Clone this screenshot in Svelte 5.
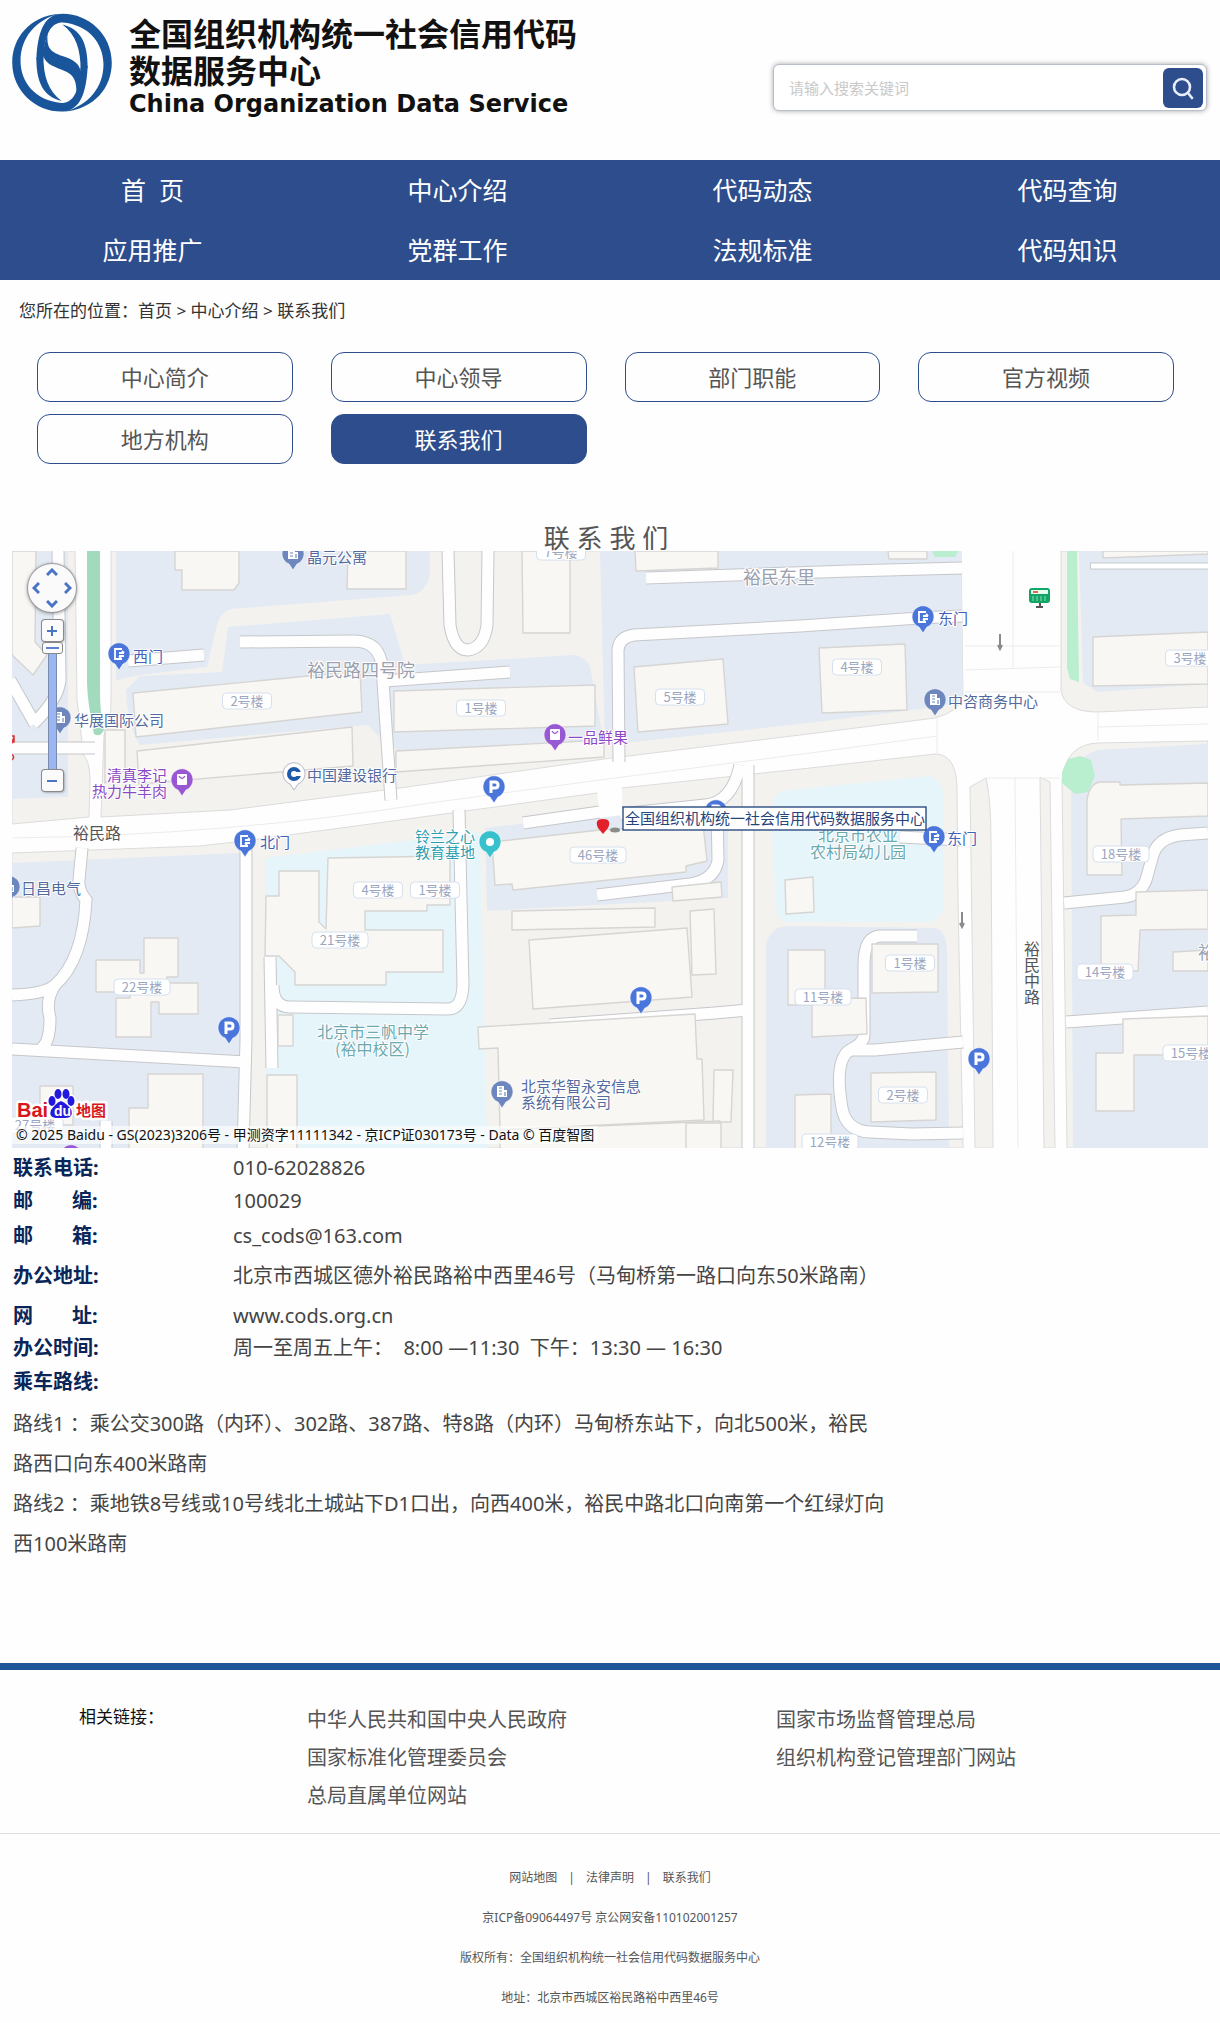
<script>
  const nav = ['首  页', '中心介绍', '代码动态', '代码查询', '应用推广', '党群工作', '法规标准', '代码知识'];
  const tabs = ['中心简介', '中心领导', '部门职能', '官方视频', '地方机构', '联系我们'];
  const links = ['中华人民共和国中央人民政府', '国家市场监督管理总局', '国家标准化管理委员会', '组织机构登记管理部门网站', '总局直属单位网站'];
  let zoom = $state(18);

  const land = [
    'M12,551 H75 L77,700 L82,742 L12,744Z',
    'M12,753 H82 Q90,760 90,780 L89,817 L12,824Z',
    'M111,551 H961 L963,697 Q958,712 935,718 L800,735 L604,759 L400,788 L230,810 L101,817 L104,735 Q111,725 111,700Z',
    'M12,853 L200,846 L244,841 L400,820 L597,793 L622,788 L810,768 L935,754 Q957,754 957,790 L958,900 L963,1148 H12Z',
    'M970,787 L986,778 Q991,800 991,840 L993,1148 H975Z',
    'M1040,777 L1050,782 L1055,1148 H1044Z',
    'M1061,551 V690 Q1064,712 1098,712 L1208,707 V551Z',
    'M1067,1148 L1062,780 Q1066,744 1098,743 L1208,741 V1148Z'
  ];
  const blue = [
    'M12,551 H68 V742 H12Z', 'M12,753 H68 V797 L12,799Z',
    'M116,551 H430 V575 Q425,593 412,595 L230,609 Q221,612 217,625 L207,667 L140,675 L116,680Z',
    'M228,627 L390,614 L405,665 L575,655 Q590,659 591,672 L604,743 L400,752 L380,738 L368,725 L140,745 Q127,725 126,690 L140,676 L222,672Z',
    'M600,551 H961 L963,702 L920,709 L800,724 L605,745Z',
    'M1079,551 H1208 V684 L1098,692 L1083,683Z',
    'M1073,1148 L1071,775 Q1080,755 1098,750 L1208,744 V1148Z',
    'M12,863 L240,853 L250,1148 H12Z',
    'M485,828 L620,812 L728,818 V898 L487,911Z',
    'M766,945 Q770,927 787,926 L935,928 Q946,930 947,950 L949,1148 H766Z'
  ];
  const cyan = [
    'M265,858 L480,832 L487,1148 H265Z',
    'M772,830 L774,797 Q778,791 790,790 L930,776 Q943,780 944,800 L943,910 Q938,922 925,922 L785,922 Q776,918 776,905Z'
  ];
  const roads = [
    'M58,551 L60,680 Q58,700 33,724', 'M10,680 L35,724', 'M12,748 H95', 'M128,661 L204,655',
    'M240,642 L355,641 Q380,642 382,667 L391,800', 'M385,681 L510,672',
    'M448,551 L450,625 Q454,650 468,650 Q484,648 487,625 L488,551',
    'M619,762 L618,650 Q619,637 634,635 L800,626 L920,618 L962,616', 'M646,578 L850,571 L962,568',
    'M82,848 L79,880 Q78,890 86,900 Q83,960 55,985 Q45,994 12,995', 'M55,985 Q45,1000 50,1018 Q50,1044 40,1049',
    'M12,1049 L246,1062', 'M246,845 L246,1040 L243,1150', 'M270,957 L272,1068',
    'M273,985 Q273,1007 290,1007 L448,1009 Q462,1009 463,985 L459,810', 'M523,823 L600,812',
    'M740,765 Q732,803 705,805 L620,814', 'M717,808 L718,860 Q715,880 690,884 L597,895',
    'M748,765 L748,1150', 'M748,1010 L715,1013 L550,1025',
    'M900,837 L962,840', 'M917,936 H880 Q864,937 864,965 V1035 Q864,1043 850,1050 Q834,1060 842,1108 Q846,1131 870,1132 L912,1134 L963,1133',
    'M963,1042 L875,1050 Q862,1050 850,1050',
    'M1208,833 L1180,835 Q1158,838 1153,855 L1146,880 Q1140,895 1125,897 L1064,903', 'M1066,1022 L1208,1012', 'M106,1121 V1150'
  ];
  const houses = [
    'M12,551 H36 L35,642 L47,655 L33,675 L12,655Z',
    'M175,551 H239 V583 L234,590 H182 V570 H175Z', 'M348,551 H406 V589 H347Z', 'M522,551 H570 V633 H523Z',
    'M635,551 H718 V568 L636,571Z', 'M133,693 L360,671 L362,712 L136,737Z', 'M137,751 L352,727 L353,766 L139,784Z',
    'M105,730 H125 V770 L105,783Z', 'M394,691 L595,685 V726 L394,732Z', 'M396,751 L604,740 V757 L396,772Z',
    'M634,667 L723,659 L728,724 L638,732Z', 'M819,648 L905,644 L907,710 L822,713Z', 'M888,551 H927 V559 H889Z',
    'M1093,637 L1208,632 V684 L1093,686Z', 'M1103,551 H1208 V554 L1103,558Z',
    'M1087,875 V800 Q1090,783 1100,782 H1120 V785 L1208,783 V816 L1121,819 L1122,875Z',
    'M1136,892 L1208,890 V929 L1140,930 L1138,971 H1101 V916 L1136,915Z', 'M1173,952 L1208,950 V971 H1173Z',
    'M1123,1019 L1208,1016 V1055 H1134 V1111 H1096 V1053 H1123Z',
    'M12,897 H40 V926 L12,928Z',
    'M144,938 H178 V977 H167 V983 H198 V1014 H159 V1002 H151 V1037 H116 V998 H130 V992 H96 V960 H140 V973 H144Z',
    'M148,1074 H203 V1150 H129 V1108 H148Z', 'M40,1086 H73 V1125 H40Z', 'M267,1075 H297 V1150 H267Z', 'M278,1015 H293 V1046 H278Z',
    'M279,871 H319 V922 L326,929 L328,858 L450,856 V905 H427 V911 H365 V930 H443 V972 H386 V985 H295 V972 L279,956 H265 L266,896 H279Z',
    'M492,842 L600,830 L703,824 L707,861 L686,866 V872 L513,890 L512,884 L495,885Z', 'M672,887 L721,882 L722,897 L673,901Z',
    'M512,911 L655,908 V927 L512,930Z', 'M529,940 L687,928 L692,997 L533,1009Z', 'M690,911 L714,909 L716,974 L692,975Z',
    'M478,1027 L695,1014 L697,1059 H702 L704,1120 L500,1130 L498,1048 L479,1049Z', 'M714,1070 H733 L731,1122 H713Z',
    'M500,1130 L720,1121 V1150 H500Z', 'M686,1123 H721 V1150 H686Z',
    'M785,880 L813,877 L814,912 L786,914Z', 'M788,950 H825 V1005 H788Z', 'M812,999 L866,998 L867,1034 L812,1037Z',
    'M872,944 H938 V992 L872,993Z', 'M871,1073 L936,1072 V1120 L871,1122Z', 'M795,1095 L831,1094 V1150 H795Z'
  ];
  const badges = [
    [247, 701, '2号楼'], [481, 708, '1号楼'], [561, 552, '7号楼'], [680, 697, '5号楼'], [857, 667, '4号楼'], [1190, 658, '3号楼'],
    [598, 855, '46号楼'], [378, 890, '4号楼'], [435, 890, '1号楼'], [340, 940, '21号楼'], [142, 987, '22号楼'], [823, 997, '11号楼'],
    [910, 963, '1号楼'], [903, 1095, '2号楼'], [830, 1142, '12号楼'], [1121, 854, '18号楼'], [1105, 972, '14号楼'], [1191, 1053, '15号楼'], [35, 1125, '27号楼']
  ];
  const pins = [
    [119, 654, 'gate'], [60, 718, 'office'], [293, 554, 'office'], [182, 780, 'shop'], [555, 735, 'shop'], [71, 1156, 'shop'],
    [494, 787, 'park'], [716, 811, 'park'], [229, 1028, 'park'], [641, 998, 'park'], [979, 1059, 'park'], [245, 841, 'gate'],
    [923, 617, 'gate'], [934, 837, 'gate'], [502, 1092, 'office'], [935, 700, 'office'], [9, 887, 'office'], [490, 842, 'edu'], [294, 774, 'bank']
  ];
  const names = [
    [133, 662, '西门', 'gate'], [74, 726, '华展国际公司', 'office'], [307, 563, '晶元公寓', 'office'], [107, 781, '清真李记', 'shop'],
    [92, 797, '热力牛羊肉', 'shop'], [568, 743, '一品鲜果', 'shop'], [307, 781, '中国建设银行', 'office'], [260, 848, '北门', 'gate'],
    [415, 842, '铃兰之心', 'edu'], [415, 858, '教育基地', 'edu'], [938, 624, '东门', 'gate'], [948, 707, '中咨商务中心', 'office'],
    [947, 844, '东门', 'gate'], [21, 894, '日昌电气', 'office'], [521, 1092, '北京华智永安信息', 'office'], [521, 1108, '系统有限公司', 'office']
  ];
</script>

{#snippet pin(x, y, kind)}
  <g transform="translate({x} {y})">
    <path class="pin {kind}" d="M0,16 L-4,10 A11,11 0 1 1 4,10Z" />
    {#if kind === 'park'}
      <path class="glyph" d="M-3,6 V-5 H1 Q4,-5 4,-2 Q4,1 1,1 H-3" />
    {:else if kind === 'gate'}
      <path class="glyph thin" d="M3,-5 H-4 V5 H3 M5,-1 H0 M3,-3 L5,-1 M0,2 H5 M0,2 L2,4" />
    {:else if kind === 'office'}
      <path class="solid" d="M-5,-6 H2 V-2 H5 V5 H-5Z" />
      <path class="cut" d="M-3,-4 H0 M-3,-1 H0 M-3,2 H0 M3,0 V4" />
    {:else if kind === 'shop'}
      <rect class="solid" x="-5" y="-6" width="10" height="11" rx="1" />
      <path class="bag" d="M-3,-4 Q0,1 3,-4" />
    {:else if kind === 'edu'}
      <circle class="solid" r="4" />
    {:else}
      <circle r="5" class="ring" />
      <path class="solid" d="M1,-2 H8 V2 H1Z" />
    {/if}
  </g>
{/snippet}

<header>
  <a class="brand" href="#home" aria-label="全国组织机构统一社会信用代码数据服务中心">
    <svg class="logo" viewBox="12 13 100 99" aria-hidden="true">
      <g transform="scale(.395 .33)" fill="#19559b">
        <path d="M150,42 C75,50 31,115 31,190 C31,275 90,338 155,338 C195,338 218,300 222,200 L204,205 C200,280 185,312 155,312 C90,305 52,250 52,185 C52,115 90,60 150,42Z" />
        <path d="M164,338 C239,330 283,265 283,190 C283,105 224,42 159,42 C119,42 96,80 92,180 L110,175 C114,100 129,68 159,68 C224,75 262,130 262,195 C262,265 224,320 164,338Z" />
        <path d="M158,74 C205,88 222,130 222,205 L204,215 C205,150 192,105 158,74Z" />
        <path d="M156,306 C109,292 92,250 92,175 L110,165 C109,230 122,275 156,306Z" />
        <path d="M121,95 C117,145 125,156 158,170 C190,182 200,195 204,215 L215,200 L194,290 C194,242 188,226 158,212 C125,198 112,185 110,168 L104,180Z" />
      </g>
    </svg>
    <span class="brand-text">
      <span>全国组织机构统一社会信用代码</span>
      <span>数据服务中心</span>
      <span class="en">China Organization Data Service</span>
    </span>
  </a>
  <form class="search" onsubmit={(e) => e.preventDefault()}>
    <input type="search" aria-label="搜索" placeholder="请输入搜索关键词" />
    <button aria-label="搜索">
      <svg viewBox="0 0 24 24" width="24" height="24" fill="none" stroke="#e8eefb" stroke-width="2.6" stroke-linecap="round"><circle cx="11" cy="11" r="8" /><path d="M17,17 L21,22" /></svg>
    </button>
  </form>
</header>

<nav class="main-nav" aria-label="主导航">
  {#each nav as item}<a href="#nav">{item}</a>{/each}
</nav>

<main>
  <p class="crumbs">您所在的位置：<a href="#home">首页</a> &gt; <a href="#about">中心介绍</a> &gt; <a href="#contact">联系我们</a></p>
  <nav class="tabs" aria-label="栏目">
    {#each tabs as tab}<a href="#tab" class:active={tab === '联系我们'}>{tab}</a>{/each}
  </nav>
  <h1>联 系 我 们</h1>

  <section class="map" aria-label="地图">
    <svg class="canvas" viewBox="12 551 1196 597">
      <rect x="12" y="551" width="1196" height="597" fill="#fefefe" />
      <g fill="#f3f2ef" stroke="#dcdcdc" stroke-width="1">{#each land as d}<path {d} />{/each}</g>
      <g fill="#e3eaf3">{#each blue as d}<path {d} />{/each}</g>
      <g fill="#e6f5fa">{#each cyan as d}<path {d} />{/each}</g>
      <g fill="none" stroke="#c6c7cb" stroke-width="13">{#each roads as d}<path {d} />{/each}</g>
      <g fill="none" stroke="#fefefe" stroke-width="11">{#each roads as d}<path {d} />{/each}</g>
      <path d="M1090,566 H1210" stroke="#c8cacd" stroke-width="7" />
      <path d="M1091,566 H1210" stroke="#fff" stroke-width="5" />
      <path d="M597,790 L622,786 L622,815 L600,818Z" fill="#fefefe" />
      <path d="M87,551 H100 V690 Q100,715 104,730 Q100,738 94,734 Q87,700 87,680Z" fill="#a1dabd" />
      <g fill="#b9eecf">
        <path d="M1067,551 H1077 L1079,682 L1070,679 L1067,668Z" />
        <path d="M932,551 H958 L955,557 H935Z" />
        <path d="M1062,772 L1068,759 L1080,756 L1091,760 L1095,776 L1088,792 L1075,794 L1062,783Z" />
      </g>
      <g fill="#f8f7f4" stroke="#d6d5d3" stroke-width="1.4" stroke-linejoin="round">{#each houses as d}<path {d} />{/each}</g>
      <g fill="none" stroke="#ececec" stroke-width="1">
        <path d="M12,838 Q230,835 430,803 L600,780 L810,753 L937,736" />
        <path d="M1013,551 V668 M965,646 H1060 M965,670 L1060,667 M965,692 H1060 M1015,777 L1018,1148 M985,778 H1060 M937,718 V754 M1098,712 V741 M1098,727 L1208,724" />
      </g>
      <g stroke="#8a8a8a" stroke-width="2" fill="none">
        <path d="M1000,634 V648 M998,645 L1000,649 L1002,645" /><path d="M962,912 V926 M960,923 L962,927 L964,923" />
      </g>

      <g class="area">
        <text x="307" y="677">裕民路四号院</text>
        <text x="743" y="584">裕民东里</text>
        <text x="1198" y="959">裕</text>
      </g>
      <g class="road">
        <text x="73" y="839">裕民路</text>
        {#each [...'裕民中路'] as ch, i}<text x="1024" y={955 + i * 16}>{ch}</text>{/each}
      </g>
      <g class="school">
        <text x="317" y="1038">北京市三帆中学</text><text x="335" y="1055">(裕中校区)</text>
        <text x="818" y="841">北京市农业</text><text x="810" y="858">农村局幼儿园</text>
      </g>
      {#each badges as [x, y, label]}
        {@const w = label.length > 3 ? 56 : 49}
        <rect class="badge" x={x - w / 2} y={y - 8} width={w} height="16" rx="4" />
        <text class="badge-text" {x} y={y + 5}>{label}</text>
      {/each}
      {#each pins as [x, y, kind]}{@render pin(x, y, kind)}{/each}
      {#each names as [x, y, label, kind]}<text class="poi {kind}" {x} {y}>{label}</text>{/each}

      <g>
        <rect x="1029" y="588" width="21" height="15" rx="3" fill="#12a566" />
        <rect x="1031" y="590" width="17" height="4" fill="#e9fff3" /><path d="M1033,592 H1038" stroke="#e06a4a" stroke-width="2" />
        <path d="M1033,596 V601 M1037,596 V601 M1041,596 V601 M1045,596 V601" stroke="#8be0b8" />
        <path d="M1040,603 V607 M1036,607 H1043" stroke="#555" stroke-width="2" />
      </g>
      <path d="M14,737 L11,745 M10,736 H14 V742 H10 M10,754 Q16,756 12,760" stroke="#d33" stroke-width="1.5" fill="none" />

      <ellipse cx="615" cy="830" rx="5" ry="2.5" fill="#8c8c88" />
      <path d="M603,834 L598,828 Q594,819 603,819 Q612,819 608,828Z" fill="#e2202c" />
      <rect x="623" y="807" width="303" height="23" fill="#fff" stroke="#2c4c80" stroke-width="1.4" />
      <text class="callout" x="625" y="824">全国组织机构统一社会信用代码数据服务中心</text>

      <g class="baidu">
        <text x="17" y="1117">Bai</text>
        <text class="cn" x="76" y="1116">地图</text>
        <g stroke="#fff" stroke-width="3" fill="#fff"><use href="#paw" /></g>
        <g id="paw">
          <g fill="#2319dc">
            <ellipse cx="52" cy="1101" rx="3.5" ry="5" /><ellipse cx="58" cy="1094" rx="3.5" ry="5" /><ellipse cx="66" cy="1094" rx="3.5" ry="5" /><ellipse cx="71" cy="1101" rx="3.5" ry="5" />
            <path d="M61,1101 Q66,1103 71,1109 Q74,1118 65,1118 H58 Q48,1118 51,1110 Q56,1103 61,1101Z" />
          </g>
        </g>
        <text class="du" x="54" y="1116">du</text>
      </g>
    </svg>

    <div class="controls">
      <div class="pan">
        <button class="n" aria-label="向上"><svg viewBox="0 0 12 8"><path d="M1,7 L6,2 L11,7" /></svg></button>
        <button class="w" aria-label="向左"><svg viewBox="0 0 12 8"><path d="M1,7 L6,2 L11,7" /></svg></button>
        <button class="e" aria-label="向右"><svg viewBox="0 0 12 8"><path d="M1,7 L6,2 L11,7" /></svg></button>
        <button class="s" aria-label="向下"><svg viewBox="0 0 12 8"><path d="M1,7 L6,2 L11,7" /></svg></button>
      </div>
      <button class="step" aria-label="放大" onclick={() => (zoom = Math.min(18, zoom + 1))}><svg viewBox="0 0 12 12"><path d="M1,6 H11 M6,1 V11" /></svg></button>
      <input class="zoom" type="range" min="3" max="18" bind:value={zoom} aria-label="缩放级别" />
      <button class="step" aria-label="缩小" onclick={() => (zoom = Math.max(3, zoom - 1))}><svg viewBox="0 0 12 12"><path d="M1,6 H11" /></svg></button>
    </div>
    <p class="copyright">© 2025 Baidu - GS(2023)3206号 - 甲测资字11111342 - 京ICP证030173号 - Data © 百度智图</p>
  </section>

  <dl>
    <div class="r36"><dt>联系电话:</dt><dd>010-62028826</dd></div>
    <div class="r30"><dt class="two"><span>邮</span><span>编:</span></dt><dd>100029</dd></div>
    <div class="r40"><dt class="two"><span>邮</span><span>箱:</span></dt><dd>cs_cods@163.com</dd></div>
    <div class="r40"><dt>办公地址:</dt><dd>北京市西城区德外裕民路裕中西里46号（马甸桥第一路口向东50米路南）</dd></div>
    <div class="r40"><dt class="two"><span>网</span><span>址:</span></dt><dd>www.cods.org.cn</dd></div>
    <div class="r24"><dt>办公时间:</dt><dd>周一至周五上午：&nbsp; 8:00 —11:30&nbsp; 下午：13:30 — 16:30</dd></div>
    <div class="r44"><dt>乘车路线:</dt><dd></dd></div>
  </dl>
  <div class="routes">
    <p>路线1 ：乘公交300路（内环）、302路、387路、特8路（内环）马甸桥东站下，向北500米，裕民<br />路西口向东400米路南</p>
    <p>路线2 ：乘地铁8号线或10号线北土城站下D1口出，向西400米，裕民中路北口向南第一个红绿灯向<br />西100米路南</p>
  </div>
</main>

<footer>
  <section class="related">
    <h2>相关链接：</h2>
    <ul>
      {#each links as link}<li><a href="#link">{link}</a></li>{/each}
    </ul>
  </section>
  <div class="legal">
    <p><a href="#map">网站地图</a><span class="sep">|</span><a href="#law">法律声明</a><span class="sep">|</span><a href="#contact">联系我们</a></p>
    <p>京ICP备09064497号 京公网安备110102001257</p>
    <p>版权所有：全国组织机构统一社会信用代码数据服务中心</p>
    <p>地址：北京市西城区裕民路裕中西里46号</p>
  </div>
</footer>

<style>
  :global(body) { background: #fefefe; color: #333; font-family: "Noto Sans", "Noto Sans CJK SC", sans-serif; }
  a { color: inherit; text-decoration: none; }
  p, h1, h2, dl, dd, ul { margin: 0; padding: 0; font-weight: 400; }
  button { padding: 0; border: 0; cursor: pointer; }

  header { display: flex; justify-content: space-between; align-items: flex-start; height: 160px; box-sizing: border-box; padding: 13px 13px 0 12px; }
  .brand { display: flex; gap: 17px; color: #111; }
  .logo { width: 100px; height: 99px; flex: none; }
  .brand-text { display: flex; flex-direction: column; font-weight: 700; font-size: 32px; line-height: 37px; padding-top: 2px; }
  .brand-text .en { font-family: "DejaVu Sans", sans-serif; font-size: 24px; line-height: 30px; white-space: nowrap; }
  .search { display: flex; align-items: center; width: 434px; height: 47px; margin-top: 51px; box-sizing: border-box; padding: 0 3px 0 15px; border: 1px solid #b9bfca; border-radius: 6px; box-shadow: 0 0 5px rgba(0, 0, 0, .35); background: #fff; }
  .search input { flex: 1; min-width: 0; padding: 0; border: 0; outline: 0; background: none; font: 15px "Noto Sans", "Noto Sans CJK SC", sans-serif; }
  .search input::placeholder { color: #c9c9c9; }
  .search button { display: grid; place-items: center; width: 40px; height: 40px; border-radius: 6px; background: #2d4d8d; }

  .main-nav { display: grid; grid-template-columns: repeat(4, 1fr); grid-auto-rows: 60px; background: #2d4d8d; color: #fff; font-size: 25px; line-height: 60px; text-align: center; }
  .main-nav a { white-space: pre; }

  .crumbs { padding: 0 19px; font-size: 17px; line-height: 24px; margin-top: 19px; }
  .tabs { display: grid; grid-template-columns: repeat(4, 1fr); gap: 12px 38px; padding: 0 46px 0 37px; margin-top: 29px; }
  .tabs a { box-sizing: border-box; height: 50px; border: 1px solid #2d4d8d; border-radius: 13px; text-align: center; font-size: 22px; line-height: 48px; color: #555; }
  .tabs .active { background: #2d4d8d; color: #fff; }
  h1 { margin-top: 61px; font-size: 26px; line-height: 26px; text-align: center; color: #555; padding-right: 8px; }

  .map { position: relative; margin: 0 12px; overflow: hidden; }
  .canvas { display: block; width: 100%; height: auto; font-family: "Noto Sans CJK SC", sans-serif; }
  .canvas text { paint-order: stroke; stroke: #fff; stroke-width: 2px; stroke-linejoin: round; }
  .area text { font-size: 18px; fill: #9aa0ae; }
  .road text { font-size: 16px; fill: #555; }
  .school text { font-size: 16px; fill: #6ba9b1; }
  .badge { fill: #fff; stroke: #d5e0ee; }
  .canvas .badge-text { font-size: 13px; fill: #9aa6c0; text-anchor: middle; }
  .poi { font-size: 15px; }
  text.gate { fill: #3e62b8; }
  text.office { fill: #536a9e; }
  text.shop { fill: #8c47c4; }
  text.edu { fill: #2e9fb0; }
  .pin { stroke: #fff; stroke-width: .6px; }
  .pin.gate, .pin.park { fill: #4a76db; }
  .pin.office { fill: #6d86bd; }
  .pin.shop { fill: #9857d3; }
  .pin.edu { fill: #38c0cc; }
  .pin.bank { fill: #fff; stroke: #b3b8c0; stroke-width: 1px; }
  .ring { fill: none; stroke: #1d5aa8; stroke-width: 4px; }
  .glyph { fill: none; stroke: #fff; stroke-width: 3px; }
  .glyph.thin { stroke-width: 1.8px; }
  .solid { fill: #fff; }
  .cut { stroke: #6d86bd; stroke-width: 1.2px; }
  .bag { fill: none; stroke: #9857d3; stroke-width: 1.4px; }
  .canvas .callout { font-size: 15px; fill: #24447c; stroke: none; }
  .canvas .baidu text { font: 700 20px "Liberation Sans", sans-serif; fill: #d9161c; stroke-width: 5px; }
  .canvas .baidu .cn { font: 700 15px "Noto Sans CJK SC", sans-serif; }
  .canvas .baidu .du { font-size: 14px; fill: #fff; stroke: none; }

  .controls { position: absolute; top: 13px; left: 16px; display: flex; flex-direction: column; align-items: center; width: 48px; }
  .controls svg { fill: none; stroke: #4a74c4; stroke-width: 3px; }
  .pan { display: grid; grid-template-columns: repeat(3, 1fr); grid-template-rows: repeat(3, 1fr); width: 48px; height: 48px; margin-bottom: 8px; border-radius: 50%; background: #fafafa; box-shadow: 0 0 1px 1px #999, 0 1px 4px rgba(0, 0, 0, .5); }
  .pan button { display: grid; place-items: center; background: none; }
  .pan svg { width: 12px; height: 8px; }
  .n { grid-area: 1 / 2; }
  .w { grid-area: 2 / 1; }
  .e { grid-area: 2 / 3; }
  .s { grid-area: 3 / 2; }
  .w svg { transform: rotate(-90deg); }
  .e svg { transform: rotate(90deg); }
  .s svg { transform: rotate(180deg); }
  .step { display: grid; place-items: center; width: 21px; height: 21px; border-radius: 3px; background: #fbfbfb; box-shadow: 0 0 0 1px #8a8a8a, 1px 1px 3px rgba(0, 0, 0, .5); }
  .step svg { width: 12px; height: 12px; stroke-width: 2px; }
  .zoom { appearance: none; writing-mode: vertical-lr; direction: rtl; width: 21px; height: 127px; margin: 1px 0; background: linear-gradient(90deg, #0000 6px, #7b8bab 6px 7px, #9bb6f2 7px 14px, #7b8bab 14px 15px, #0000 15px); }
  .zoom::-webkit-slider-thumb { appearance: none; width: 21px; height: 12px; border: 1px solid #888; border-radius: 3px; background: linear-gradient(#5b83d0, #5b83d0) center / 13px 2px no-repeat #fbfbfb; }
  .copyright { position: absolute; left: 0; bottom: 4px; padding: 0 4px; background: rgba(255, 255, 255, .6); color: #111; font-size: 14px; line-height: 18px; }

  dl { padding: 2px 13px 0; font-size: 20px; }
  dl div { display: grid; grid-template-columns: 220px 1fr; align-items: center; line-height: 24px; }
  dt { color: #0a2558; font-weight: 700; }
  .two { display: grid; grid-template-columns: 59px auto; }
  dd { color: #444; }
  .r24 { height: 24px; }
  .r30 { height: 30px; }
  .r36 { height: 36px; }
  .r40 { height: 40px; }
  .r44 { height: 44px; }
  .routes { padding: 0 13px; font-size: 20px; line-height: 40px; color: #444; }

  footer { margin-top: 99px; border-top: 7px solid #1b5799; }
  .related { display: grid; grid-template-columns: 228px 1fr; padding: 31px 0 18px 79px; border-bottom: 1px solid #ddd; }
  .related h2 { font-size: 17px; line-height: 32px; color: #111; }
  ul { display: grid; grid-template-columns: 469px 1fr; grid-auto-rows: 38px; list-style: none; font-size: 20px; line-height: 38px; color: #555; }
  .legal { padding: 24px 0 5px; text-align: center; font-size: 12px; line-height: 40px; color: #555; }
  .sep { margin: 0 11px; }
</style>
